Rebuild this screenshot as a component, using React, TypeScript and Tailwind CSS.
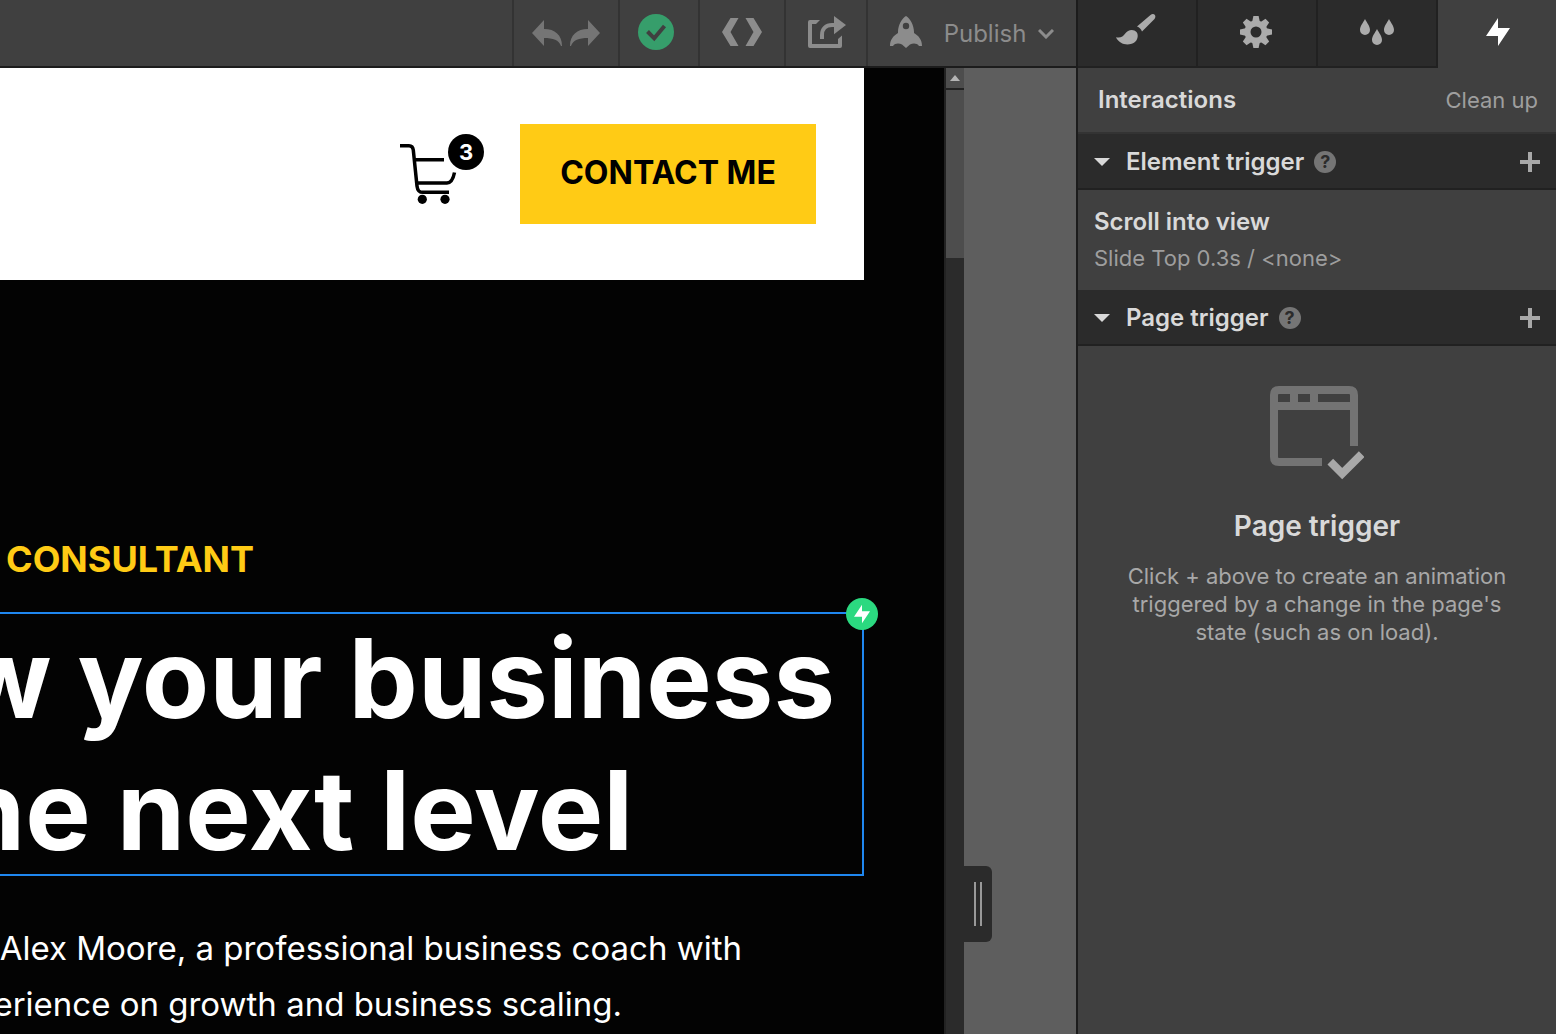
import type { ReactNode } from "react"

function UndoIcon() {
  return (
    <svg width="30" height="26" viewBox="0 0 30 26" fill="currentColor" aria-hidden>
      <path d="M0 13 12 0v9c11 0 18 6 18 17h-1c-2-6-8-8-17-8v8z" />
    </svg>
  )
}

function CheckCircleIcon() {
  return (
    <svg width="36" height="36" viewBox="0 0 36 36" aria-hidden>
      <circle cx="18" cy="18" r="18" fill="#369e6b" />
      <path d="m9.5 17.5 6.7 6.8 10.3-12.3" fill="none" stroke="#404040" strokeWidth="4" />
    </svg>
  )
}

function CodeIcon() {
  return (
    <svg width="40" height="28" viewBox="0 0 40 28" fill="currentColor" aria-hidden>
      <path d="M8.5 0h8l-8 14 8 14h-8L0 14zM31.500 0h-8l8 14-8 14h8L40 14z" />
    </svg>
  )
}

function ShareIcon() {
  return (
    <svg width="38" height="32" viewBox="0 0 38 32" fill="currentColor" aria-hidden>
      <path d="M12 4H2Q0 4 0 6v24q0 2 2 2h30q2 0 2-2V19.500L30 23v5H4V8h4z" />
      <path d="m26 0 12 9-12 9.300z" />
      <path d="M14 23v-4c0-6 4-10 10-10h3" fill="none" stroke="currentColor" strokeWidth="4" />
    </svg>
  )
}

function RocketIcon() {
  return (
    <svg width="32" height="32" viewBox="0 0 32 32" fill="currentColor" aria-hidden>
      <path
        fillRule="evenodd"
        d="M16 0c4 2.500 8 9 8 16v1c5 3 8 7 8 13h-3c-2-3-6-3-9-1.500L16 32l-4-3.500C9 27 5 27 3 30H0c0-6 3-10 8-13v-1C8 9 12 2.500 16 0zm0 6.800a3.200 3.200 0 1 0 0 6.400 3.200 3.200 0 0 0 0-6.400z"
      />
    </svg>
  )
}

function BrushIcon() {
  return (
    <svg width="40" height="36" viewBox="0 0 40 36" fill="currentColor" aria-hidden>
      <path d="M0 23.300c5 1 7-1 9-3.500C12 15 18 15 20.500 18c2.500 3.500 1 8.500-2.500 10.800C11.500 32.500 3 30 0 23.300z" />
      <path d="M21 12.500 34.500 1c3-2.500 6.500 0 4 4L26 17.500c-1-2.500-2.500-4-5-5z" />
    </svg>
  )
}

const teeth = [0, 45, 90, 135, 180, 225, 270, 315]

function GearIcon() {
  return (
    <svg width="32" height="32" viewBox="0 0 32 32" fill="currentColor" aria-hidden>
      <circle cx="16" cy="16" r="8.500" fill="none" stroke="currentColor" strokeWidth="6" />
      {teeth.map((angle) => (
        <path key={angle} d="M12 6.500 13.400 0h5.200L20 6.500z" transform={`rotate(${angle} 16 16)`} />
      ))}
    </svg>
  )
}

function DropsIcon() {
  const drop = "c2 4 5 7 5 11a5 5 0 0 1-10 0c0-4 3-7 5-11z"
  return (
    <svg width="36" height="26" viewBox="-2 0 36 26" fill="currentColor" aria-hidden>
      <path d={`M5 0${drop}M17 10${drop}M29 0${drop}`} />
    </svg>
  )
}

function BoltIcon({ className }: { className: string }) {
  return (
    <svg className={className} viewBox="0 0 24 28" fill="currentColor" aria-hidden>
      <path d="M12 0v10h12L12 28V18H0z" />
    </svg>
  )
}

function CartIcon() {
  return (
    <svg width="84" height="72" viewBox="0 0 84 72" aria-hidden>
      <g fill="none" stroke="black" strokeWidth="3.500">
        <path d="M0 11.700h9c3 0 4 1.500 4.300 4.500L17 52c.5 4.500 2 6.300 6 6.300h26M15 25.700h29M18 49h29c4 0 6-3 7.500-10.500" />
      </g>
      <circle cx="22.300" cy="65.300" r="4.600" />
      <circle cx="45" cy="65.300" r="4.600" />
    </svg>
  )
}

function PageIcon() {
  return (
    <svg width="94" height="94" viewBox="0 0 94 94" fill="none" strokeWidth="8" aria-hidden>
      <path
        d="M52 76H9q-5 0-5-5V9q0-5 5-5h70q5 0 5 5v51M4 20h80M24 8v8M44 8v8"
        stroke="#737373"
      />
      <path d="m60.300 75.700 11.900 11.900 19.500-19.500" stroke="#a8a8a8" />
    </svg>
  )
}

function HelpIcon() {
  return (
    <span className="flex size-[22px] items-center justify-center rounded-full bg-[#757575] text-lg leading-none font-bold text-[#2b2b2b]">
      ?
    </span>
  )
}

function ToolButton({
  label,
  className,
  children,
}: {
  label: string
  className: string
  children: ReactNode
}) {
  return (
    <button
      type="button"
      aria-label={label}
      className={`flex shrink-0 items-center justify-center border-l-2 border-[#333333] ${className}`}
    >
      {children}
    </button>
  )
}

function Toolbar() {
  return (
    <div className="flex h-[68px] shrink-0 justify-end border-b-2 border-[#1c1c1c] bg-[#404040] text-[#8c8c8c]">
      <div className="flex w-[106px] items-center justify-center gap-2 border-l-2 border-[#333333] text-[#757575]">
        <button type="button" aria-label="Undo">
          <UndoIcon />
        </button>
        <button type="button" aria-label="Redo" className="-scale-x-100">
          <UndoIcon />
        </button>
      </div>
      <ToolButton label="Status" className="w-20 pr-1.5 pb-0.5">
        <CheckCircleIcon />
      </ToolButton>
      <ToolButton label="Code" className="w-[86px] pb-0.5">
        <CodeIcon />
      </ToolButton>
      <ToolButton label="Share" className="w-[82px] pb-0.5 pl-0.5">
        <ShareIcon />
      </ToolButton>
      <ToolButton label="Publish" className="w-[210px] pb-0.5">
        <RocketIcon />
        <span className="flex items-center gap-3 pt-1 pl-[22px] text-2xl">
          Publish
          <svg width="16" height="10" viewBox="0 0 16 10" fill="none" aria-hidden>
            <path d="m1 1 7 7 7-7" stroke="currentColor" strokeWidth="3" />
          </svg>
        </span>
      </ToolButton>
    </div>
  )
}

function Site() {
  return (
    <div className="min-w-0 flex-1 overflow-hidden bg-[#030303] pr-20">
      <header className="flex h-[212px] items-center justify-end gap-9 bg-white pr-12">
        <a href="#cart" aria-label="Cart, 3 items" className="relative mb-2">
          <CartIcon />
          <span className="absolute top-0 right-0 flex size-9 items-center justify-center rounded-full bg-black text-[22px] font-bold text-white">
            3
          </span>
        </a>
        <button type="button" className="h-[100px] w-[296px] bg-[#ffcb15] pb-0.5 text-[32px] font-bold text-black">
          CONTACT ME
        </button>
      </header>
      <main className="pt-[255px] whitespace-nowrap text-white">
        <p className="pl-1.5 text-[36px] leading-[48px] font-bold text-[#ffcb15]">CONSULTANT</p>
        <h1 className="relative mt-[29px] -ml-0.5 text-[110px] leading-[132px] font-bold inset-ring-2 inset-ring-[#1f87f0]">
          <span className="flex justify-end pr-[29px]">w your business</span>
          <span className="flex justify-end pr-[231px]">he next level</span>
          <span className="absolute -top-3.5 -right-3.5 flex size-8 items-center justify-center rounded-full bg-[#2bd980]">
            <BoltIcon className="h-[22px] w-4" />
          </span>
        </h1>
        <div className="mt-11 text-[33px] leading-[56px]">
          <p className="flex justify-end pr-[122px]">Alex Moore, a professional business coach with</p>
          <p className="flex justify-end pr-[242px]">erience on growth and business scaling.</p>
        </div>
      </main>
    </div>
  )
}

function Scrollbar() {
  return (
    <div className="flex w-5 shrink-0 flex-col border-l-2 border-[#222222] bg-[#2b2b2b]">
      <button
        type="button"
        aria-label="Scroll up"
        className="flex h-[22px] items-center justify-center border-b-2 border-[#222222] bg-[#4d4d4d]"
      >
        <svg width="10" height="6" viewBox="0 0 10 6" fill="#b5b5b5" aria-hidden>
          <path d="m5 0 5 6H0z" />
        </svg>
      </button>
      <div className="h-[168px] bg-[#4d4d4d]" />
    </div>
  )
}

const tabs = [
  { label: "Style", icon: <BrushIcon /> },
  { label: "Settings", icon: <GearIcon /> },
  { label: "Effects", icon: <DropsIcon /> },
]

function SectionHeader({ title }: { title: string }) {
  return (
    <div className="flex h-14 items-center border-b-2 border-[#212121] bg-[#2b2b2b] px-4 pt-0.5">
      <button type="button" className="flex items-center gap-4 text-2xl font-semibold text-[#d9d9d9]">
        <svg width="16" height="8" viewBox="0 0 16 8" fill="currentColor" aria-hidden>
          <path d="M0 0h16L8 8z" />
        </svg>
        {title}
      </button>
      <div className="ml-2.5 flex-1">
        <HelpIcon />
      </div>
      <button type="button" aria-label={`Add ${title.toLowerCase()}`} className="text-[#a8a8a8]">
        <svg width="20" height="20" viewBox="0 0 20 20" aria-hidden>
          <path d="M10 0v20M0 10h20" stroke="currentColor" strokeWidth="4" />
        </svg>
      </button>
    </div>
  )
}

function InteractionsPanel() {
  return (
    <aside className="w-[480px] shrink-0 border-l-2 border-[#1c1c1c] bg-[#404040] text-[#d9d9d9]">
      <div className="flex h-[68px]">
        {tabs.map((tab) => (
          <button
            key={tab.label}
            type="button"
            aria-label={tab.label}
            className="flex w-[120px] items-center justify-center border-r-2 border-b-2 border-[#212121] bg-[#2b2b2b] pr-0.5 pb-0.5 text-[#ababab]"
          >
            {tab.icon}
          </button>
        ))}
        <button
          type="button"
          aria-label="Interactions"
          className="flex flex-1 items-center justify-center pb-1 pl-0.5 text-white"
        >
          <BoltIcon className="h-7 w-6" />
        </button>
      </div>
      <div className="flex h-[66px] items-center justify-between border-b-2 border-[#333333] pr-[18px] pl-5">
        <h2 className="text-2xl font-semibold">Interactions</h2>
        <button type="button" className="text-[22px] text-[#9e9e9e]">
          Clean up
        </button>
      </div>
      <SectionHeader title="Element trigger" />
      <div className="flex h-[100px] flex-col justify-center px-4">
        <p className="text-2xl leading-9 font-semibold">Scroll into view</p>
        <p className="text-[22px] leading-9 text-[#9e9e9e]">Slide Top 0.3s / &lt;none&gt;</p>
      </div>
      <SectionHeader title="Page trigger" />
      <div className="flex flex-col items-center px-10 pt-10 text-center">
        <PageIcon />
        <h3 className="mt-7 text-[28px] leading-9 font-semibold">Page trigger</h3>
        <p className="mt-[18px] text-[22px] leading-7 text-[#a8a8a8]">
          Click + above to create an animation
          <br />
          triggered by a change in the page's
          <br />
          state (such as on load).
        </p>
      </div>
    </aside>
  )
}

export default function App() {
  return (
    <div className="flex h-screen overflow-hidden bg-[#5e5e5e] font-['Inter',sans-serif]">
      <div className="flex min-w-0 flex-1 flex-col">
        <Toolbar />
        <div className="flex min-h-0 flex-1">
          <Site />
          <Scrollbar />
          <div className="flex w-28 shrink-0 items-end pb-[92px]">
            <button
              type="button"
              aria-label="Resize canvas"
              className="flex h-[76px] w-7 items-center justify-center gap-1 rounded-r-md bg-[#2b2b2b]"
            >
              <span className="h-11 w-0.5 bg-[#999999]" />
              <span className="h-11 w-0.5 bg-[#999999]" />
            </button>
          </div>
        </div>
      </div>
      <InteractionsPanel />
    </div>
  )
}
